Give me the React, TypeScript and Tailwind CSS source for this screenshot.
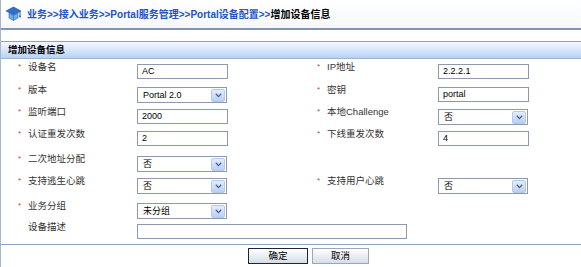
import React from 'react';

interface Field {
  label: string;
  kind: 'input' | 'select';
  value: string;
  star?: boolean;
  wide?: boolean;
}

interface Row {
  h: string;
  left: Field;
  right?: Field;
}

const rows: Row[] = [
  { h: 'h-[23px]', left: { label: '设备名', kind: 'input', value: 'AC', star: true }, right: { label: 'IP地址', kind: 'input', value: '2.2.2.1', star: true } },
  { h: 'h-[22px]', left: { label: '版本', kind: 'select', value: 'Portal 2.0', star: true }, right: { label: '密钥', kind: 'input', value: 'portal', star: true } },
  { h: 'h-[22px]', left: { label: '监听端口', kind: 'input', value: '2000', star: true }, right: { label: '本地Challenge', kind: 'select', value: '否', star: true } },
  { h: 'h-[25px]', left: { label: '认证重发次数', kind: 'input', value: '2', star: true }, right: { label: '下线重发次数', kind: 'input', value: '4', star: true } },
  { h: 'h-[22px]', left: { label: '二次地址分配', kind: 'select', value: '否', star: true } },
  { h: 'h-[25px]', left: { label: '支持逃生心跳', kind: 'select', value: '否', star: true }, right: { label: '支持用户心跳', kind: 'select', value: '否', star: true } },
  { h: 'h-[21px]', left: { label: '业务分组', kind: 'select', value: '未分组', star: true } },
  { h: 'h-[23px]', left: { label: '设备描述', kind: 'input', value: '', wide: true } },
];

const CapIcon = () => (
  <svg width="17" height="18" viewBox="0 0 17 18">
    <path d="M1 6 L8.5 2 L16 6 L8.5 10 Z" fill="#2f6fc9" stroke="#1d4f9a" strokeWidth="0.6" />
    <path d="M4 8.2 L4 13 L8.5 15.5 L13 13 L13 8.2 L8.5 10.6 Z" fill="#6fb0e8" stroke="#2a62b0" strokeWidth="0.6" />
    <path d="M8.5 10.6 L8.5 15.5" stroke="#2a62b0" strokeWidth="0.6" />
    <path d="M15 6.5 L15 11" stroke="#1d4f9a" strokeWidth="0.9" />
    <circle cx="15" cy="11.5" r="0.9" fill="#1d4f9a" />
  </svg>
);

const Control = ({ f }: { f: Field }) => {
  if (f.kind === 'select') {
    return (
      <div className="mt-[3px] h-[16px] w-[90px] border border-[#8e9aab] bg-white flex items-center justify-between">
        <span className="pl-[5px] text-[9px] leading-none text-black">{f.value}</span>
        <span className="mr-[1px] h-[13px] w-[14px] rounded-[2px] border border-[#b7c9ea] bg-gradient-to-b from-[#e4edfd] to-[#b9cff4] flex items-center justify-center">
          <svg width="7" height="5" viewBox="0 0 7 5">
            <path d="M0.8 0.8 L3.5 3.6 L6.2 0.8" fill="none" stroke="#4b5f8a" strokeWidth="1.3" />
          </svg>
        </span>
      </div>
    );
  }
  return (
    <div className={`mt-[3px] h-[15px] ${f.wide ? 'w-[270px]' : 'w-[91px]'} border border-[#8e9aab] bg-white flex items-center`}>
      <span className="pl-[4px] text-[9px] leading-none text-black">{f.value}</span>
    </div>
  );
};

const Label = ({ f, w }: { f: Field; w: string }) => (
  <div className={`${w} flex items-start text-[9.5px] leading-[12px] text-[#333]`}>
    <span className="w-[10px] text-[8px] text-[#b24848]">{f.star ? '*' : ''}</span>
    <span>{f.label}</span>
  </div>
);

const App: React.FC = () => {
  return (
    <div className="w-[581px] h-[267px] overflow-hidden bg-white border-l border-[#a7b5ca] font-['Liberation_Sans','Noto_Sans_CJK_SC',sans-serif]">
      <div className="h-[30px] border-b-2 border-[#8194b4] bg-gradient-to-b from-white to-[#f6f8fb] flex items-center pl-[4px] gap-[5px]">
        <CapIcon />
        <div className="text-[10px] font-bold">
          <span className="text-[#2353c4]">业务&gt;&gt;接入业务&gt;&gt;Portal服务管理&gt;&gt;Portal设备配置&gt;&gt;</span>
          <span className="text-black">增加设备信息</span>
        </div>
      </div>

      <div className="mt-[11px] border-t border-b border-[#8ea0bd]">
        <div className="h-[17px] border-b border-[#9fb3d3] bg-gradient-to-b from-[#f6f9fe] to-[#b7d2f5] flex items-center pl-[7px] text-[9.5px] font-bold text-black">
          增加设备信息
        </div>
        <div className="pt-[2px]">
          {rows.map((r) => (
            <div key={r.left.label} className={`${r.h} flex items-start`}>
              <div className="w-[17px]" />
              <Label f={r.left} w="w-[119px]" />
              <div className="w-[180px]">
                <Control f={r.left} />
              </div>
              {r.right && (
                <>
                  <Label f={r.right} w="w-[121px]" />
                  <Control f={r.right} />
                </>
              )}
            </div>
          ))}
        </div>
      </div>

      <div className="mt-[3px] pl-[247px] flex gap-[4px]">
        <button className="h-[16px] w-[60px] border border-[#1e2530] bg-gradient-to-b from-white to-[#d5dde9] text-[9.5px] leading-none text-black">
          确定
        </button>
        <button className="h-[16px] w-[57px] border border-[#9aa8bc] bg-gradient-to-b from-white to-[#d5dde9] text-[9.5px] leading-none text-black">
          取消
        </button>
      </div>
    </div>
  );
};

export default App;
